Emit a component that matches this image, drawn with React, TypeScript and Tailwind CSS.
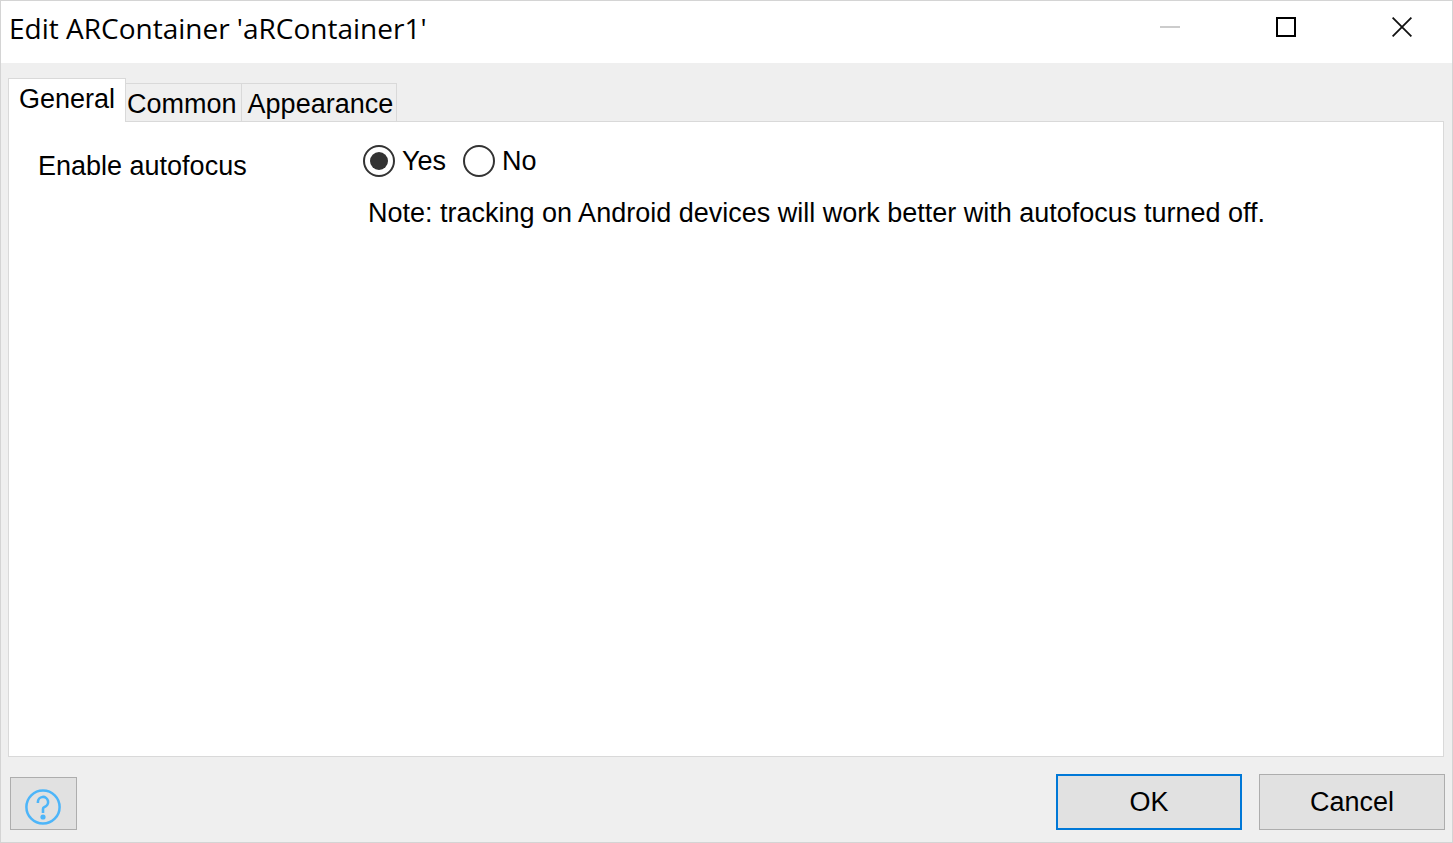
import { useState } from "react";

const tabs = ["General", "Common", "Appearance"];

export default function App() {
  const [active, setActive] = useState("General");
  const [autofocus, setAutofocus] = useState("yes");

  return (
    <div className="flex min-h-screen flex-col border border-[#d4d4d4] bg-[#efefef] font-['Liberation_Sans',Arial,sans-serif] text-[27px] leading-8 text-black">
      <header className="flex h-[62px] justify-between bg-white">
        <h1 className="pt-[7px] pl-2 font-['Open_Sans','Noto_Sans',sans-serif] text-[28px] leading-10">
          Edit ARContainer 'aRContainer1'
        </h1>
        <div className="flex h-13 gap-4">
          <button type="button" aria-label="Minimize" disabled className="flex w-[100px] items-center justify-center">
            <svg width="20" height="20" viewBox="0 0 20 20">
              <rect y="9" width="20" height="2" fill="#cccccc" />
            </svg>
          </button>
          <button type="button" aria-label="Maximize" className="flex w-[100px] items-center justify-center">
            <svg width="20" height="20" viewBox="0 0 20 20">
              <rect x="1" y="1" width="18" height="18" fill="none" stroke="#000" strokeWidth="2" />
            </svg>
          </button>
          <button type="button" aria-label="Close" className="flex w-[100px] items-center justify-center">
            <svg width="20" height="20" viewBox="0 0 20 20">
              <path d="M.6.6l18.8 18.8M19.4.6L.6 19.4" fill="none" stroke="#111" strokeWidth="1.8" />
            </svg>
          </button>
        </div>
      </header>

      <main className="flex grow flex-col pt-[15px] pr-2 pl-[7px]">
        <div role="tablist" className="z-10 -mb-px flex items-end">
          {tabs.map((tab) => (
            <button
              key={tab}
              type="button"
              role="tab"
              aria-selected={active === tab}
              onClick={() => setActive(tab)}
              className={
                active === tab
                  ? "h-11 border border-b-0 border-[#d9d9d9] bg-white px-[10px] pb-[3px]"
                  : "h-[39px] border border-l-0 border-[#d9d9d9] pt-[3px] pr-[3px] pl-[6px] first:border-l nth-2:pr-1 nth-2:pl-px"
              }
            >
              {tab}
            </button>
          ))}
        </div>
        <section role="tabpanel" className="grow border border-[#d9d9d9] bg-white px-[29px] pt-[23px]">
          <fieldset className="flex items-start">
            <legend className="float-left w-[325px] shrink-0 pt-[5px]">Enable autofocus</legend>
            <div className="flex gap-[17px]">
              {[
                ["yes", "Yes"],
                ["no", "No"],
              ].map(([value, label]) => (
                <label key={value} className="flex items-center gap-[7px]">
                  <input
                    type="radio"
                    name="autofocus"
                    value={value}
                    checked={autofocus === value}
                    onChange={() => setAutofocus(value)}
                    className="size-8 appearance-none rounded-full border-2 border-[#333] bg-clip-content p-[5px] checked:bg-[#333]"
                  />
                  {label}
                </label>
              ))}
            </div>
          </fieldset>
          <p className="pt-[15px] pl-[330px]">
            Note: tracking on Android devices will work better with autofocus turned off.
          </p>
        </section>
      </main>

      <footer className="flex items-end justify-between pt-[17px] pr-[7px] pb-3 pl-[9px]">
        <button
          type="button"
          aria-label="Help"
          className="flex h-[53px] w-[67px] items-center border border-[#adadad] bg-[#e1e1e1] pt-[7px] pl-[14px]"
        >
          <svg width="36" height="36" viewBox="0 0 36 36" fill="none" stroke="#4db5f9">
            <circle cx="18" cy="18" r="16.6" strokeWidth="2.5" />
            <path d="M12.9 14v-1a5.1 5.1 0 1 1 6.6 4.9c-1.2.4-1.5.9-1.5 2v4" strokeWidth="2.6" />
            <circle cx="18" cy="28" r="2.6" fill="#4db5f9" stroke="none" />
          </svg>
        </button>
        <div className="flex gap-[17px]">
          <button type="button" className="h-14 w-[186px] border-2 border-[#0078d7] bg-[#e1e1e1]">
            OK
          </button>
          <button type="button" className="h-14 w-[186px] border border-[#adadad] bg-[#e1e1e1]">
            Cancel
          </button>
        </div>
      </footer>
    </div>
  );
}
